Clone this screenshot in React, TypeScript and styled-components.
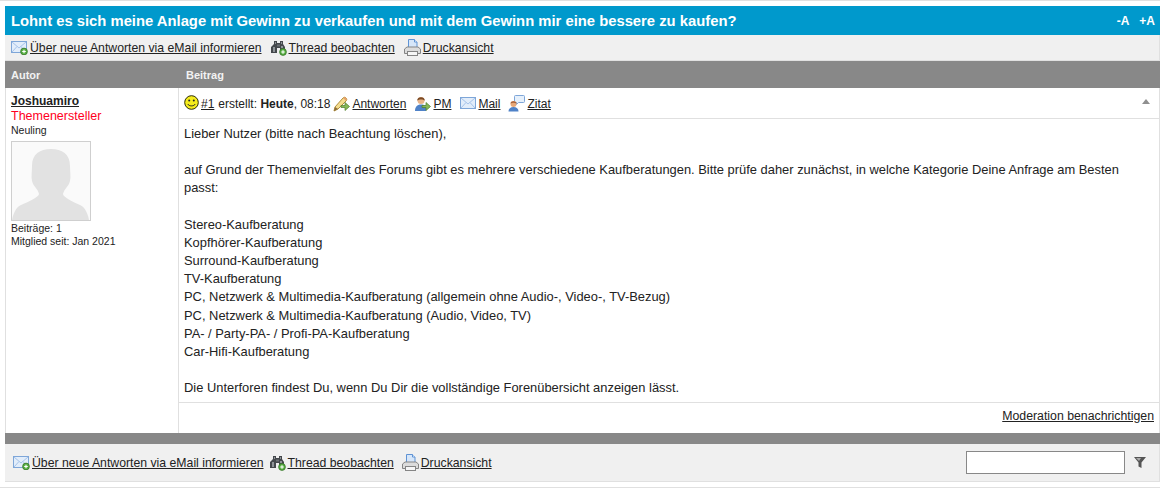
import * as React from "react";
import styled, { createGlobalStyle } from "styled-components";

const GlobalStyle = createGlobalStyle`
  html, body {
    margin: 0;
    padding: 0;
    background: #fff;
  }
  body {
    font-family: "Liberation Sans", Arial, sans-serif;
    font-size: 12px;
    color: #222;
  }
`;

const PlusBadge: React.FC<{ cx: number; cy: number }> = ({ cx, cy }) => (
  <>
    <circle cx={cx} cy={cy} r="3.4" fill="#58b043" stroke="#2f6b22" strokeWidth="0.7" />
    <path d={`M${cx - 1.8} ${cy}h3.6M${cx} ${cy - 1.8}v3.6`} stroke="#fff" strokeWidth="1.1" />
  </>
);

const MailIcon: React.FC<{ plus?: boolean }> = ({ plus }) => (
  <svg width={plus ? 17 : 16} height="15" viewBox={plus ? "0 0 17 15" : "0 0 16 15"}>
    <rect x="0.5" y="1.5" width="15" height="11" fill="#e2edfa" stroke="#7ea6d8" />
    <path d="M1 2l7 6 7-6M1 12l5-5.500M15 12l-5-5.500" fill="none" stroke="#a5c3ea" />
    {plus && <PlusBadge cx={13} cy={11.5} />}
  </svg>
);

const BinocularsIcon = () => (
  <svg width="16" height="16" viewBox="0 0 16 16">
    <path d="M3 1h3v2h3V1h3v3l2 3v5H9V8H6v5H0V7l3-3z" fill="#44484c" />
    <path d="M2 7h2v5H2zM10 6h2v2h-2zM4 2h1v2H4zM10 2h1v2h-1z" fill="#8f9498" />
    <path d="M6 4.500h3v2H6z" fill="#6b6f73" />
    <PlusBadge cx={12} cy={12} />
  </svg>
);

const PrinterIcon = () => (
  <svg width="17" height="17" viewBox="0 0 17 17">
    <path d="M4.500 0.500h6l2.500 2.500v6H4.500z" fill="#d6e6f9" stroke="#5f93d4" />
    <path d="M10.500 0.500v2.500H13" fill="#fff" stroke="#5f93d4" />
    <path d="M3 8h11l2.500 2v4.500h-16V10z" fill="#dcdcdc" stroke="#858585" />
    <rect x="3.500" y="12.500" width="10" height="4" fill="#f6f6f6" stroke="#858585" />
  </svg>
);

const SmileyIcon = () => (
  <svg width="15" height="15" viewBox="0 0 15 15">
    <circle cx="7.500" cy="7.500" r="6.800" fill="#f5ec1c" stroke="#2b2b00" />
    <circle cx="5.200" cy="5.500" r="1" fill="#222" />
    <circle cx="9.800" cy="5.500" r="1" fill="#222" />
    <path d="M3.800 9c1 2.500 6.400 2.500 7.400 0" fill="none" stroke="#222" />
  </svg>
);

const GreenArrow = () => (
  <path d="M8 9.500h4V6.500l4.500 4-4.500 4v-3H8z" fill="#86b757" stroke="#4e7d2c" strokeWidth="0.7" />
);

const ReplyIcon = () => (
  <svg width="17" height="16" viewBox="0 0 17 16">
    <path d="M1 15l1-4 8-9c1-1 2-1 3 0s1 2 0 3l-8 8z" fill="#f3dc8e" stroke="#b08f3c" />
    <path d="M1 15l1-4 3 2z" fill="#8a6b3a" />
    <path d="M10 2c1-1 2-1 3 0s1 2 0 3z" fill="#e8a06a" />
    <GreenArrow />
  </svg>
);

const PersonArrowIcon = () => (
  <svg width="17" height="16" viewBox="0 0 17 16">
    <circle cx="7" cy="4.500" r="3.500" fill="#eab488" />
    <path d="M3.200 4.500C3 0 11 0 10.800 4.500 9 3 5 3 3.200 4.500z" fill="#7a4a25" />
    <path d="M1 15c0-4 2-6.500 6-6.500s5 2 5 4V15z" fill="#4f82c8" />
    <GreenArrow />
  </svg>
);

const QuoteIcon = () => (
  <svg width="17" height="17" viewBox="0 0 17 17">
    <path d="M7.500 0.500h8a1 1 0 0 1 1 1v5a1 1 0 0 1-1 1h-5l-2 2v-2h-1a1 1 0 0 1-1-1v-5a1 1 0 0 1 1-1z" fill="#e6f0fb" stroke="#7ea6d8" />
    <circle cx="5.500" cy="9" r="3" fill="#e8a878" />
    <path d="M2.500 8.500c0-3 6-3 6 0-2-1-4-1-6 0z" fill="#a8623a" />
    <path d="M0.500 16.500c0-3 2-4.500 5-4.500s5 1.500 5 4.500z" fill="#4f82c8" />
  </svg>
);

const FunnelIcon = () => (
  <svg width="12" height="11" viewBox="0 0 12 11">
    <path d="M0 0h12L7.500 5.500V11L4.500 9.500v-4z" fill="#555" />
    <path d="M2 1h5L5 4z" fill="#aaa" />
  </svg>
);

const AvatarPicture = () => (
  <svg width="78" height="78" viewBox="0 0 78 78">
    <rect width="78" height="78" fill="#fafafa" />
    <path d="M20 24C20 12 28 7 39 7s19 5 19 17c0 6 1 10 0 15-1 5-6 8-7 13 0 3 10 8 17 11 5 2 8 9 9 15H0c1-6 4-13 9-15 7-3 18-8 18-11-1-5-6-8-7-13-1-5 0-9 0-15z" fill="#e2e2e2" />
  </svg>
);

const toolbarLinks = [
  { key: "mail", icon: <MailIcon plus />, label: "Über neue Antworten via eMail informieren" },
  { key: "watch", icon: <BinocularsIcon />, label: "Thread beobachten" },
  { key: "print", icon: <PrinterIcon />, label: "Druckansicht" },
];

const postLines = [
  "Stereo-Kaufberatung",
  "Kopfhörer-Kaufberatung",
  "Surround-Kaufberatung",
  "TV-Kaufberatung",
  "PC, Netzwerk & Multimedia-Kaufberatung (allgemein ohne Audio-, Video-, TV-Bezug)",
  "PC, Netzwerk & Multimedia-Kaufberatung (Audio, Video, TV)",
  "PA- / Party-PA- / Profi-PA-Kaufberatung",
  "Car-Hifi-Kaufberatung",
];

export default function App() {
  return (
    <>
      <GlobalStyle />
      <StyledPage>
        <StyledTitleBar>
          <StyledTitle>
            Lohnt es sich meine Anlage mit Gewinn zu verkaufen und mit dem Gewinn mir eine bessere zu kaufen?
          </StyledTitle>
          <StyledFontSizes>
            <span>-A</span>
            <span>+A</span>
          </StyledFontSizes>
        </StyledTitleBar>

        <StyledTopToolbar>
          {toolbarLinks.map((item) => (
            <StyledToolLink key={item.key}>
              {item.icon}
              <a href="#">{item.label}</a>
            </StyledToolLink>
          ))}
        </StyledTopToolbar>

        <StyledHeaderRow>
          <StyledAuthorHead>Autor</StyledAuthorHead>
          <StyledPostHead>Beitrag</StyledPostHead>
        </StyledHeaderRow>

        <StyledPostRow>
          <StyledAuthorCol>
            <StyledUserName href="#">Joshuamiro</StyledUserName>
            <StyledUserRole>Themenersteller</StyledUserRole>
            <StyledSmallLine>Neuling</StyledSmallLine>
            <StyledAvatar>
              <AvatarPicture />
            </StyledAvatar>
            <StyledSmallLine>Beiträge: 1</StyledSmallLine>
            <StyledSmallLine>Mitglied seit: Jan 2021</StyledSmallLine>
          </StyledAuthorCol>

          <StyledPostCol>
            <StyledPostMeta>
              <StyledSmileyWrap>
                <SmileyIcon />
              </StyledSmileyWrap>
              <a href="#">#1</a>
              <StyledMetaText>
                erstellt: <b>Heute</b>, 08:18
              </StyledMetaText>
              <StyledMetaLink $gap={8}>
                <ReplyIcon />
                <a href="#">Antworten</a>
              </StyledMetaLink>
              <StyledMetaLink $gap={9}>
                <PersonArrowIcon />
                <a href="#">PM</a>
              </StyledMetaLink>
              <StyledMetaLink $gap={8}>
                <MailIcon />
                <a href="#">Mail</a>
              </StyledMetaLink>
              <StyledMetaLink $gap={0}>
                <QuoteIcon />
                <a href="#">Zitat</a>
              </StyledMetaLink>
              <StyledCollapse />
            </StyledPostMeta>

            <StyledPostBody>
              <p>Lieber Nutzer (bitte nach Beachtung löschen),</p>
              <p>
                auf Grund der Themenvielfalt des Forums gibt es mehrere verschiedene Kaufberatungen. Bitte prüfe daher
                zunächst, in welche Kategorie Deine Anfrage am Besten passt:
              </p>
              <p>
                {postLines.map((line) => (
                  <React.Fragment key={line}>
                    {line}
                    <br />
                  </React.Fragment>
                ))}
              </p>
              <p>Die Unterforen findest Du, wenn Du Dir die vollständige Forenübersicht anzeigen lässt.</p>
            </StyledPostBody>

            <StyledPostFooter>
              <a href="#">Moderation benachrichtigen</a>
            </StyledPostFooter>
          </StyledPostCol>
        </StyledPostRow>

        <StyledDivider />

        <StyledBottomToolbar>
          <StyledBottomLinks>
            {toolbarLinks.map((item) => (
              <StyledToolLink key={item.key}>
                {item.icon}
                <a href="#">{item.label}</a>
              </StyledToolLink>
            ))}
          </StyledBottomLinks>
          <StyledFilter>
            <StyledFilterInput type="text" />
            <FunnelIcon />
          </StyledFilter>
        </StyledBottomToolbar>
      </StyledPage>
      <StyledEndLine />
    </>
  );
}

const StyledPage = styled.div`
  width: 1155px;
  margin-left: 5px;
  padding-top: 6px;

  a {
    color: #222;
    text-decoration: underline;
  }
  &::before {
    content: "";
    display: block;
    height: 1px;
    margin: -6px 0 5px -5px;
    background: #e0e0e0;
  }
`;

const StyledTitleBar = styled.div`
  display: flex;
  align-items: center;
  justify-content: space-between;
  height: 29px;
  padding: 0 5px 0 6px;
  background: #0099cc;
  color: #fff;
`;

const StyledTitle = styled.h1`
  margin: 0;
  font-size: 14.8px;
  font-weight: bold;
`;

const StyledFontSizes = styled.div`
  display: flex;
  gap: 10px;
  font-size: 12px;
  font-weight: bold;
`;

const StyledTopToolbar = styled.div`
  display: flex;
  align-items: center;
  gap: 9px;
  height: 25px;
  padding-left: 6px;
  font-size: 12.25px;
  background: #f0f0f0;
  border-right: 1px solid #e0e0e0;
  border-bottom: 1px solid #e0e0e0;
`;

const StyledToolLink = styled.span`
  display: inline-flex;
  align-items: center;
  gap: 2px;
`;

const StyledHeaderRow = styled.div`
  display: flex;
  align-items: center;
  height: 27px;
  background: #888888;
  color: #f2f2f2;
  font-size: 11px;
  font-weight: bold;
`;

const StyledAuthorHead = styled.div`
  width: 175px;
  padding-left: 6px;
  box-sizing: border-box;
`;

const StyledPostHead = styled.div`
  padding-left: 6px;
`;

const StyledPostRow = styled.div`
  display: flex;
  height: 345px;
  border-left: 1px solid #e0e0e0;
  border-right: 1px solid #e0e0e0;
  box-sizing: border-box;
`;

const StyledAuthorCol = styled.div`
  display: flex;
  flex-direction: column;
  align-items: flex-start;
  width: 173px;
  padding: 6px 0 0 5px;
  box-sizing: border-box;
  border-right: 1px solid #e0e0e0;
`;

const StyledUserName = styled.a`
  margin-bottom: 1px;
  font-size: 12px;
  font-weight: bold;
  line-height: 14px;
`;

const StyledUserRole = styled.div`
  color: #ff0022;
  font-size: 12.5px;
  line-height: 15px;
`;

const StyledSmallLine = styled.div`
  font-size: 10.5px;
  line-height: 13px;
`;

const StyledAvatar = styled.div`
  display: flex;
  margin: 4px 0 1px;
  border: 1px solid #cfcfcf;
`;

const StyledPostCol = styled.div`
  display: flex;
  flex: 1;
  flex-direction: column;
  min-width: 0;
`;

const StyledPostMeta = styled.div`
  display: flex;
  align-items: center;
  flex-shrink: 0;
  height: 31px;
  padding: 1px 6px 0 5px;
  box-sizing: border-box;
  border-bottom: 1px solid #e0e0e0;
`;

const StyledSmileyWrap = styled.span`
  display: flex;
  margin: -3px 2px 0 0;
`;

const StyledMetaText = styled.span`
  margin: 0 3px 0 4px;
`;

const StyledMetaLink = styled.span<{ $gap: number }>`
  display: inline-flex;
  align-items: center;
  gap: 2px;
  margin-right: ${({ $gap }) => $gap}px;
`;

const StyledCollapse = styled.span`
  width: 0;
  height: 0;
  margin: -4px 3px 0 auto;
  border-left: 4px solid transparent;
  border-right: 4px solid transparent;
  border-bottom: 5px solid #8f8f8f;
`;

const StyledPostBody = styled.div`
  flex: 1;
  padding: 5.6px 30px 0 5px;
  font-size: 12.9px;
  line-height: 18.2px;

  p {
    margin: 0 0 18.2px;
  }
  p:last-child {
    margin-bottom: 0;
  }
`;

const StyledPostFooter = styled.div`
  display: flex;
  justify-content: flex-end;
  align-items: center;
  height: 31px;
  padding: 0 5px 5px 0;
  font-size: 12.3px;
  box-sizing: border-box;
  border-top: 1px solid #e0e0e0;
`;

const StyledDivider = styled.div`
  height: 11px;
  background: #888888;
`;

const StyledBottomToolbar = styled.div`
  display: flex;
  align-items: center;
  justify-content: space-between;
  height: 38px;
  padding: 0 13px 0 8px;
  font-size: 12.25px;
  background: #f0f0f0;
  border-right: 1px solid #e0e0e0;
  border-bottom: 1px solid #e0e0e0;
  box-sizing: border-box;
`;

const StyledBottomLinks = styled.div`
  display: flex;
  gap: 6px;

  > :last-child {
    margin-left: 2px;
  }
`;

const StyledFilter = styled.div`
  display: flex;
  align-items: center;
  gap: 9px;
`;

const StyledFilterInput = styled.input`
  width: 159px;
  height: 23px;
  padding: 0;
  box-sizing: border-box;
  border: 1px solid #888;
  background: #fff;
`;

const StyledEndLine = styled.div`
  width: 1160px;
  height: 1px;
  margin-top: 5px;
  background: #e0e0e0;
`;
